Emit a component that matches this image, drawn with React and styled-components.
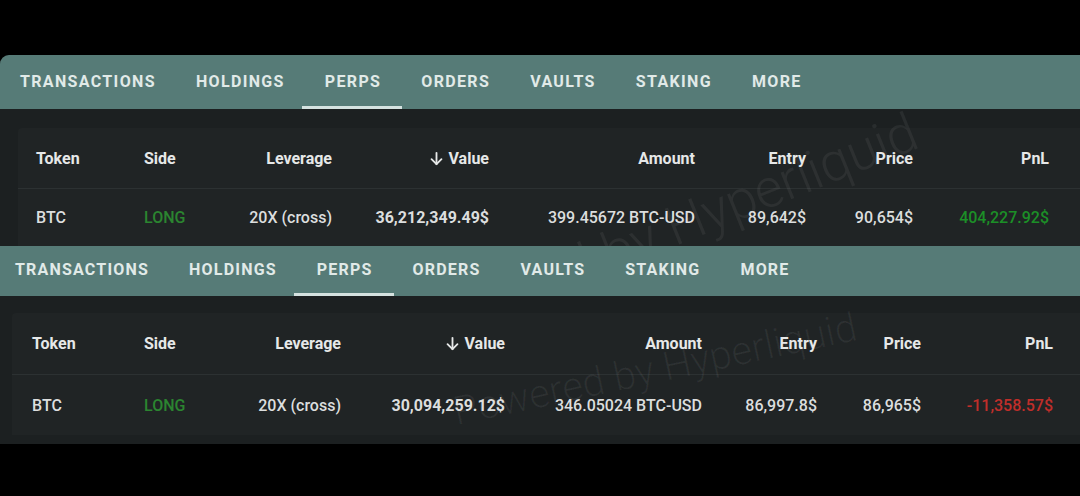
import styled, { createGlobalStyle } from "styled-components";

const GlobalStyle = createGlobalStyle`
  html, body {
    margin: 0;
    padding: 0;
    background: #000;
  }
  body {
    font-family: Roboto, "Liberation Sans", Arial, sans-serif;
    -webkit-font-smoothing: antialiased;
  }
`;

const Page = styled.div`
  width: 1080px;
  height: 496px;
  background: #000;
  padding-top: 55px;
  box-sizing: border-box;
  overflow: hidden;
`;

const Panel = styled.section`
  position: relative;
  overflow: hidden;
  border-top-left-radius: ${(p) => (p.$rounded ? "9px" : "0")};
  background: #1c2021;
`;

const TabBar = styled.div`
  height: ${(p) => p.$height}px;
  background: #567b77;
  display: flex;
  align-items: stretch;
`;

const TabList = styled.div`
  display: flex;
  align-items: stretch;
  margin-left: ${(p) => p.$offset}px;
`;

const Tab = styled.div`
  position: relative;
  display: flex;
  align-items: center;
  padding: 0 20px ${(p) => p.$lift}px;
  font-size: 16px;
  font-weight: 700;
  letter-spacing: ${(p) => p.$spacing}px;
  color: #e1eae8;
  text-transform: uppercase;

  &::after {
    content: "";
    display: ${(p) => (p.$active ? "block" : "none")};
    position: absolute;
    left: -3px;
    right: -1px;
    bottom: 0;
    height: 3px;
    background: #d5e2e0;
  }
`;

const Body = styled.div`
  position: relative;
  overflow: hidden;
  padding: ${(p) => p.$padTop}px 0 ${(p) => p.$padBottom}px ${(p) => p.$padLeft}px;
`;

const Card = styled.div`
  position: relative;
  z-index: 1;
  background: #202425;
  border-top-left-radius: 4px;
`;

const Row = styled.div`
  display: grid;
  grid-template-columns: ${(p) => p.$cols};
  align-items: center;
  height: ${(p) => p.$height}px;
  padding-left: ${(p) => p.$inset}px;
  border-bottom: ${(p) => (p.$divider ? "1px solid #2c3132" : "none")};
`;

const HeadCell = styled.div`
  display: flex;
  align-items: center;
  justify-content: ${(p) => (p.$left ? "flex-start" : "flex-end")};
  gap: 4px;
  font-size: 16px;
  font-weight: 700;
  color: #e6e8e8;
`;

const Cell = styled.div`
  text-align: ${(p) => (p.$left ? "left" : "right")};
  font-size: 16px;
  font-weight: ${(p) => (p.$bold ? 700 : 500)};
  color: ${(p) => p.$color || "#dcdede"};
  white-space: nowrap;
`;

const Watermark = styled.div`
  position: absolute;
  z-index: 2;
  left: ${(p) => p.$x}px;
  top: ${(p) => p.$y}px;
  font-size: ${(p) => p.$size}px;
  line-height: 1;
  font-weight: 300;
  color: rgba(255, 255, 255, 0.06);
  white-space: nowrap;
  transform: rotate(${(p) => p.$angle}deg);
  transform-origin: left bottom;
  pointer-events: none;
`;

const ArrowDown = () => (
  <svg width="17" height="17" viewBox="0 0 24 24" fill="none" stroke="#e6e8e8" strokeWidth="2.6" strokeLinecap="round" strokeLinejoin="round">
    <path d="M12 4v16" />
    <path d="m19 13-7 7-7-7" />
  </svg>
);

const tabs = ["Transactions", "Holdings", "Perps", "Orders", "Vaults", "Staking", "More"];

const panels = [
  {
    rounded: true,
    tabHeight: 54,
    tabOffset: 0,
    tabLift: 1,
    tabSpacing: 1.35,
    padTop: 19,
    padBottom: 0,
    padLeft: 18,
    inset: 18,
    headHeight: 60,
    rowHeight: 57,
    cols: "108px 56px 132px 157px 206px 111px 107px 136px",
    watermark: { x: 410, y: 200, size: 54, angle: -22 },
    row: {
      value: "36,212,349.49$",
      amount: "399.45672 BTC-USD",
      entry: "89,642$",
      price: "90,654$",
      pnl: "404,227.92$",
      pnlColor: "#1c8f27",
    },
  },
  {
    rounded: false,
    tabHeight: 50,
    tabOffset: -5,
    tabLift: 4,
    tabSpacing: 1.2,
    padTop: 17,
    padBottom: 9,
    padLeft: 12,
    inset: 20,
    headHeight: 61,
    rowHeight: 60,
    cols: "112px 56px 141px 164px 197px 115px 104px 132px",
    watermark: { x: 458, y: 96, size: 40, angle: -12 },
    row: {
      value: "30,094,259.12$",
      amount: "346.05024 BTC-USD",
      entry: "86,997.8$",
      price: "86,965$",
      pnl: "-11,358.57$",
      pnlColor: "#c02e2a",
    },
  },
];

const PerpsPanel = ({ p }) => (
  <Panel $rounded={p.rounded}>
    <TabBar $height={p.tabHeight}>
      <TabList $offset={p.tabOffset}>
        {tabs.map((t) => (
          <Tab key={t} $active={t === "Perps"} $lift={p.tabLift} $spacing={p.tabSpacing}>
            {t}
          </Tab>
        ))}
      </TabList>
    </TabBar>
    <Body $padTop={p.padTop} $padBottom={p.padBottom} $padLeft={p.padLeft}>
      <Card>
        <Row $cols={p.cols} $height={p.headHeight} $inset={p.inset} $divider>
          <HeadCell $left>Token</HeadCell>
          <HeadCell $left>Side</HeadCell>
          <HeadCell>Leverage</HeadCell>
          <HeadCell>
            <ArrowDown />
            Value
          </HeadCell>
          <HeadCell>Amount</HeadCell>
          <HeadCell>Entry</HeadCell>
          <HeadCell>Price</HeadCell>
          <HeadCell>PnL</HeadCell>
        </Row>
        <Row $cols={p.cols} $height={p.rowHeight} $inset={p.inset}>
          <Cell $left>BTC</Cell>
          <Cell $left $color="#2b8530">LONG</Cell>
          <Cell>20X (cross)</Cell>
          <Cell $bold>{p.row.value}</Cell>
          <Cell>{p.row.amount}</Cell>
          <Cell>{p.row.entry}</Cell>
          <Cell>{p.row.price}</Cell>
          <Cell $color={p.row.pnlColor}>{p.row.pnl}</Cell>
        </Row>
      </Card>
      <Watermark $x={p.watermark.x} $y={p.watermark.y} $size={p.watermark.size} $angle={p.watermark.angle}>
        Powered by Hyperliquid
      </Watermark>
    </Body>
  </Panel>
);

export default function App() {
  return (
    <>
      <GlobalStyle />
      <Page>
        {panels.map((p, i) => (
          <PerpsPanel key={i} p={p} />
        ))}
      </Page>
    </>
  );
}
